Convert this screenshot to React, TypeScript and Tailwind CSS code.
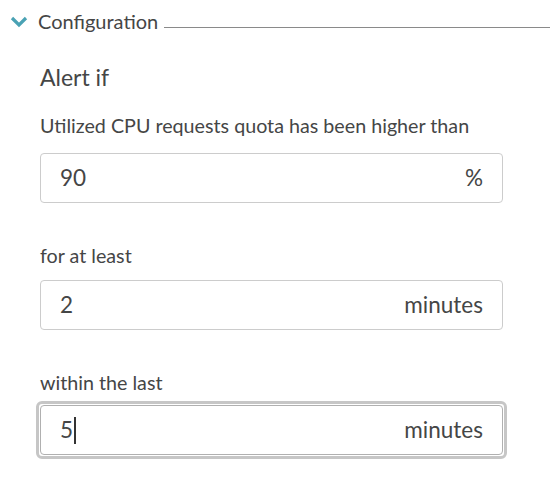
import React from "react";

function Field({ value, unit, focused }: { value: string; unit: string; focused?: boolean }) {
  return (
    <div className={focused ? "-mx-[4px] rounded-[6px] border-[3px] border-[#c6c6c6] p-px" : ""}>
      <div
        className={`flex h-[50px] items-center justify-between rounded-[4px] border bg-white px-[19px] text-[22.5px] ${
          focused ? "border-[#b0b0b0]" : "border-[#cccccc]"
        }`}
      >
        <span className="flex items-center">
          {value}
          {focused && <span className="ml-px inline-block h-[27px] w-[1.5px] bg-[#333]" />}
        </span>
        <span>{unit}</span>
      </div>
    </div>
  );
}

export default function App() {
  return (
    <div className="h-[498px] w-[550px] bg-white text-[#454646]" style={{ fontFamily: "Lato, sans-serif" }}>
      <div className="flex items-center pt-[9px] pl-[10px]">
        <svg width="18" height="13" viewBox="0 0 18 13" className="mr-[10px]">
          <path d="M2 3 L9 10 L16 3" fill="none" stroke="#4aa2b4" strokeWidth="3.2" />
        </svg>
        <span className="text-[20px] leading-[24px]">Configuration</span>
        <div className="ml-[6px] mt-[12px] h-px flex-1 bg-[#8a8a8a]" />
      </div>
      <div className="ml-[40px] mr-[47px]">
        <div className="mt-[30px] text-[23px] leading-[28px]">Alert if</div>
        <div className="mt-[23px] text-[19.7px] leading-[24px]">Utilized CPU requests quota has been higher than</div>
        <div className="mt-[15px]">
          <Field value="90" unit="%" />
        </div>
        <div className="mt-[41px] text-[19.7px] leading-[24px]">for at least</div>
        <div className="mt-[12px]">
          <Field value="2" unit="minutes" />
        </div>
        <div className="mt-[41px] text-[19.7px] leading-[24px]">within the last</div>
        <div className="mt-[6px]">
          <Field value="5" unit="minutes" focused />
        </div>
      </div>
    </div>
  );
}
